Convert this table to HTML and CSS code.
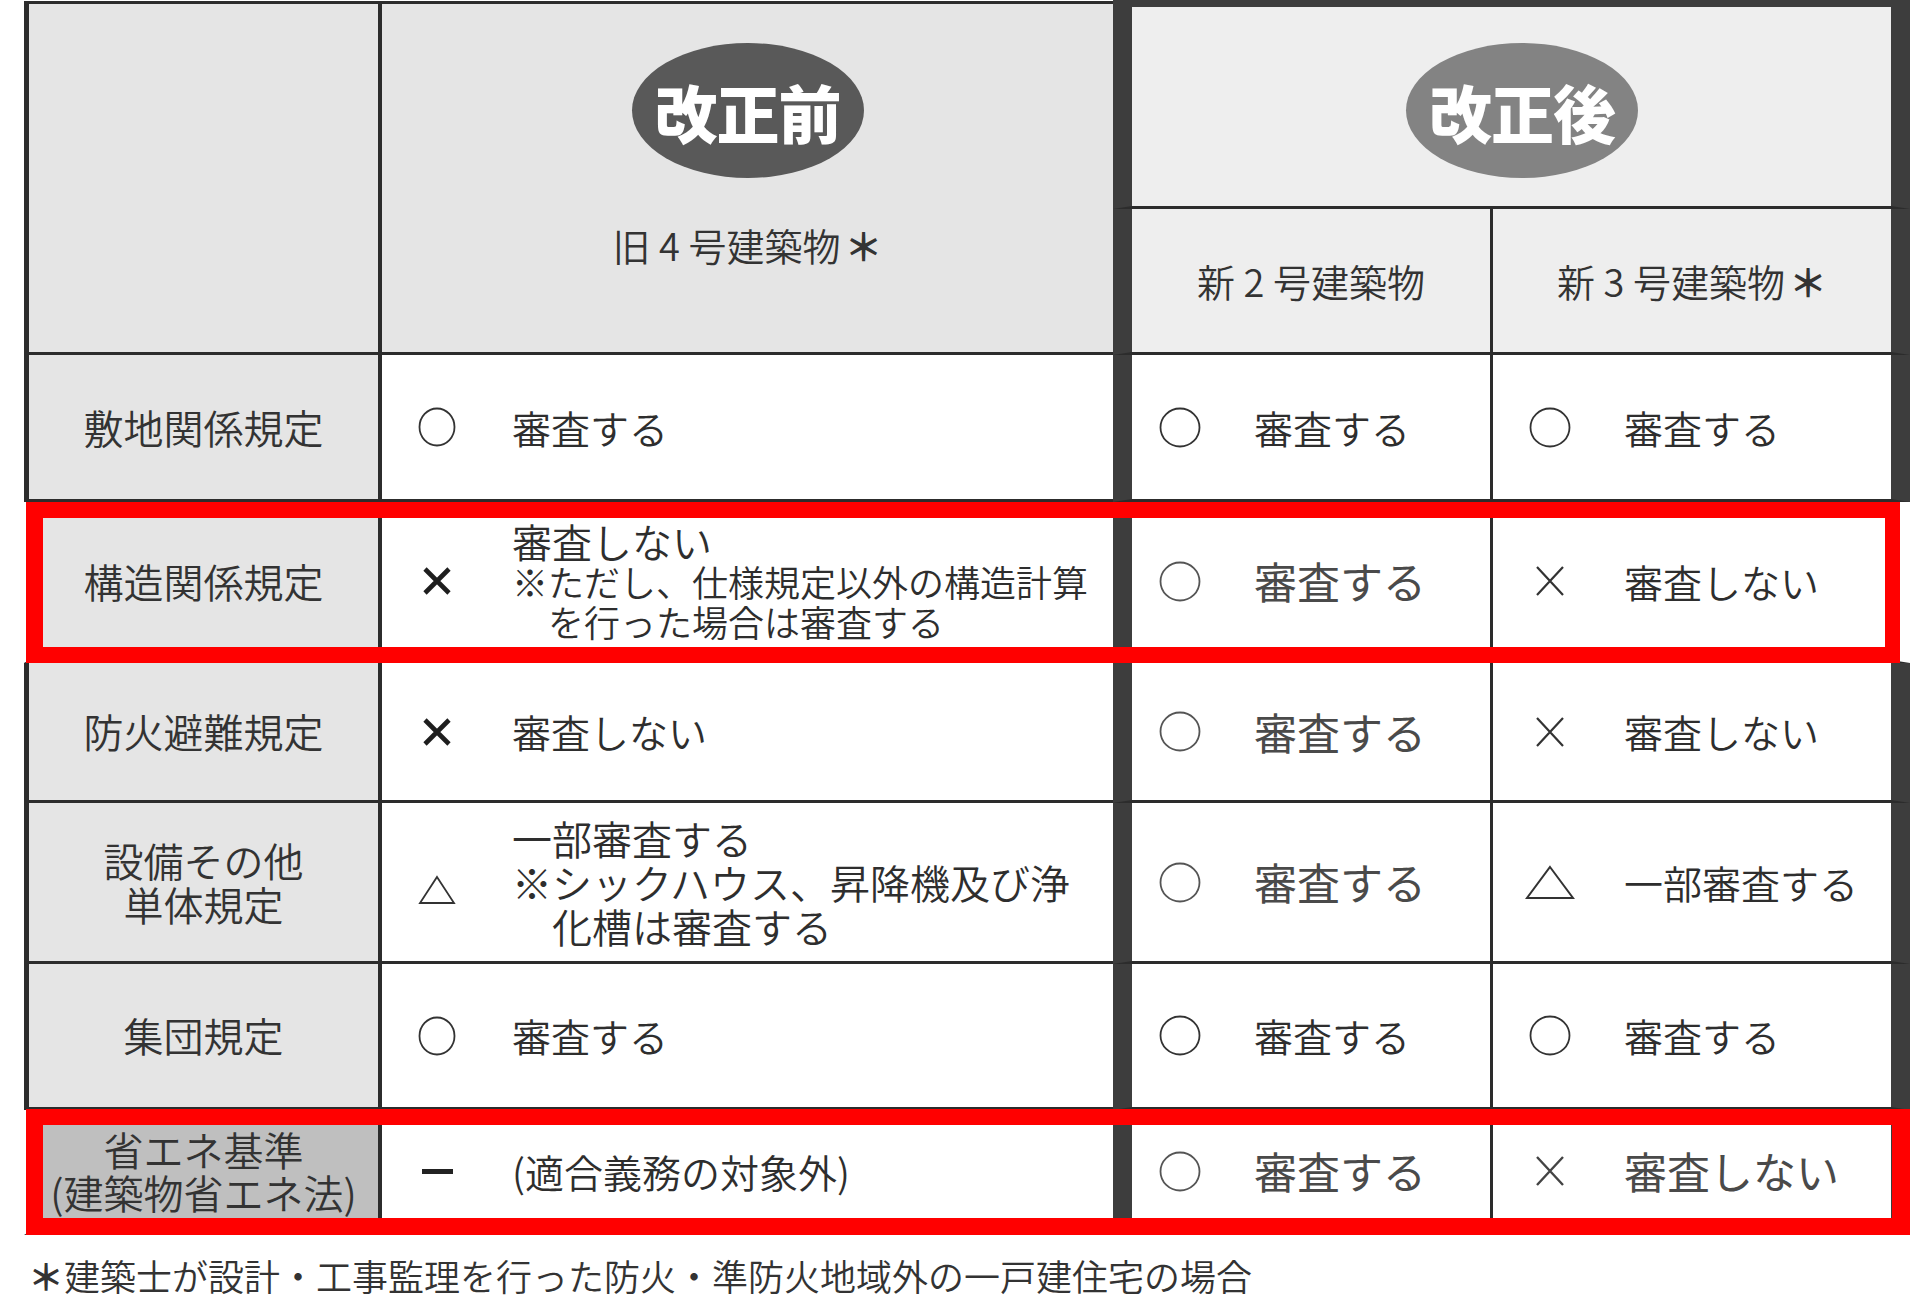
FILE: index.html
```html
<!DOCTYPE html>
<html lang="ja">
<head>
<meta charset="utf-8">
<title>審査対象の比較</title>
<link rel="stylesheet" href="styles.css">
</head>
<body>
<div class="page">
  <div class="table">
    <div class="cols head">
      <div class="hd-blank"></div>
      <div class="hd-before">
        <div class="badge badge-before">改正前</div>
        <div class="hd-title">旧 4 号建築物<span class="ast">＊</span></div>
      </div>
      <div class="hd-after">
        <div class="badge badge-after">改正後</div>
      </div>
      <div class="sub sub2">新 2 号建築物</div>
      <div class="sub sub3">新 3 号建築物<span class="ast">＊</span></div>
    </div>

    <div class="cols row r1">
      <div class="c1">敷地関係規定</div>
      <div class="c2"><span class="sym"><svg width="38" height="40" viewBox="0 0 38 40"><ellipse cx="19" cy="20" rx="17.5" ry="18.5" fill="none" stroke="#333" stroke-width="1.8"/></svg></span><span class="txt">審査する</span></div>
      <div class="c3"><span class="sym"><svg width="42" height="41" viewBox="0 0 42 41"><ellipse cx="21" cy="20.5" rx="19.5" ry="19" fill="none" stroke="#333" stroke-width="1.8"/></svg></span><span class="txt">審査する</span></div>
      <div class="c4"><span class="sym"><svg width="42" height="41" viewBox="0 0 42 41"><ellipse cx="21" cy="20.5" rx="19.5" ry="19" fill="none" stroke="#333" stroke-width="1.8"/></svg></span><span class="txt">審査する</span></div>
    </div>

    <div class="cols row r2 hl">
      <div class="c1">構造関係規定</div>
      <div class="c2"><span class="sym"><svg width="30" height="30" viewBox="0 0 30 30"><path d="M3 3 L27 27 M27 3 L3 27" stroke="#1e1e1e" stroke-width="4.6" fill="none"/></svg></span>
        <div class="txt multi m2">
          <div class="ln first">審査しない</div>
          <div class="ln">※ただし、仕様規定以外の構造計算</div>
          <div class="ln ind">を行った場合は審査する</div>
        </div>
      </div>
      <div class="c3"><span class="sym"><svg width="42" height="41" viewBox="0 0 42 41"><ellipse cx="21" cy="20.5" rx="19.5" ry="19" fill="none" stroke="#555" stroke-width="1.8"/></svg></span><span class="txt big">審査する</span></div>
      <div class="c4"><span class="sym"><svg width="32" height="32" viewBox="0 0 32 32"><path d="M3 2 L29 30 M29 2 L3 30" stroke="#333" stroke-width="2.2" fill="none"/></svg></span><span class="txt">審査しない</span></div>
    </div>

    <div class="cols row r3">
      <div class="c1">防火避難規定</div>
      <div class="c2"><span class="sym"><svg width="30" height="30" viewBox="0 0 30 30"><path d="M3 3 L27 27 M27 3 L3 27" stroke="#1e1e1e" stroke-width="4.6" fill="none"/></svg></span><span class="txt">審査しない</span></div>
      <div class="c3"><span class="sym"><svg width="42" height="41" viewBox="0 0 42 41"><ellipse cx="21" cy="20.5" rx="19.5" ry="19" fill="none" stroke="#555" stroke-width="1.8"/></svg></span><span class="txt big">審査する</span></div>
      <div class="c4"><span class="sym"><svg width="32" height="32" viewBox="0 0 32 32"><path d="M3 2 L29 30 M29 2 L3 30" stroke="#333" stroke-width="2.2" fill="none"/></svg></span><span class="txt">審査しない</span></div>
    </div>

    <div class="cols row r4">
      <div class="c1 two">設備その他<br>単体規定</div>
      <div class="c2"><span class="sym tri-low"><svg width="38" height="30" viewBox="0 0 38 30"><polygon points="19,2 36,28 2,28" fill="none" stroke="#333" stroke-width="1.8"/></svg></span>
        <div class="txt multi m4">
          <div class="ln">一部審査する</div>
          <div class="ln">※シックハウス、昇降機及び浄</div>
          <div class="ln ind">化槽は審査する</div>
        </div>
      </div>
      <div class="c3"><span class="sym"><svg width="42" height="41" viewBox="0 0 42 41"><ellipse cx="21" cy="20.5" rx="19.5" ry="19" fill="none" stroke="#555" stroke-width="1.8"/></svg></span><span class="txt big">審査する</span></div>
      <div class="c4"><span class="sym"><svg width="50" height="35" viewBox="0 0 50 35"><polygon points="25,2 48,33 2,33" fill="none" stroke="#333" stroke-width="2"/></svg></span><span class="txt">一部審査する</span></div>
    </div>

    <div class="cols row r5">
      <div class="c1">集団規定</div>
      <div class="c2"><span class="sym"><svg width="38" height="40" viewBox="0 0 38 40"><ellipse cx="19" cy="20" rx="17.5" ry="18.5" fill="none" stroke="#333" stroke-width="1.8"/></svg></span><span class="txt">審査する</span></div>
      <div class="c3"><span class="sym"><svg width="42" height="41" viewBox="0 0 42 41"><ellipse cx="21" cy="20.5" rx="19.5" ry="19" fill="none" stroke="#333" stroke-width="1.8"/></svg></span><span class="txt">審査する</span></div>
      <div class="c4"><span class="sym"><svg width="42" height="41" viewBox="0 0 42 41"><ellipse cx="21" cy="20.5" rx="19.5" ry="19" fill="none" stroke="#333" stroke-width="1.8"/></svg></span><span class="txt">審査する</span></div>
    </div>

    <div class="cols row r6 hl">
      <div class="c1 two dark">省エネ基準<br>(建築物省エネ法)</div>
      <div class="c2"><span class="sym"><span class="dash"></span></span><span class="txt">(適合義務の対象外)</span></div>
      <div class="c3"><span class="sym"><svg width="42" height="41" viewBox="0 0 42 41"><ellipse cx="21" cy="20.5" rx="19.5" ry="19" fill="none" stroke="#555" stroke-width="1.8"/></svg></span><span class="txt big">審査する</span></div>
      <div class="c4"><span class="sym"><svg width="32" height="32" viewBox="0 0 32 32"><path d="M3 2 L29 30 M29 2 L3 30" stroke="#444" stroke-width="2.4" fill="none"/></svg></span><span class="txt big">審査しない</span></div>
    </div>
  </div>
  <p class="note"><span class="ast">＊</span>建築士が設計・工事監理を行った防火・準防火地域外の一戸建住宅の場合</p>
</div>
</body>
</html>
```

FILE: styles.css
```css
* {
  box-sizing: border-box;
  margin: 0;
  padding: 0;
}

html,
body {
  background: #ffffff;
}

body {
  font-family: "Noto Sans CJK JP", "Noto Sans", sans-serif;
  font-weight: 350;
  color: #333333;
}

.page {
  width: 1920px;
  padding-left: 24px;
}

.table {
  width: 1886px;
  display: flex;
  flex-direction: column;
}

.cols {
  display: grid;
  grid-template-columns: 358px 731px 380px 417px;
}

/* ---------- header ---------- */
.head {
  grid-template-rows: 209px 146px;
}

.hd-blank {
  grid-row: 1 / 3;
  grid-column: 1;
  margin-top: 1px;
  background: #e5e5e5;
  border-top: 3px solid #2c2c2c;
  border-left: 5px solid #2c2c2c;
  border-right: 4px solid #2c2c2c;
  border-bottom: 3px solid #2c2c2c;
}

.hd-before {
  grid-row: 1 / 3;
  grid-column: 2;
  margin-top: 1px;
  background: #e5e5e5;
  border-top: 3px solid #2c2c2c;
  border-bottom: 3px solid #2c2c2c;
  display: flex;
  flex-direction: column;
  align-items: center;
  padding-top: 39px;
}

.hd-after {
  grid-row: 1;
  grid-column: 3 / 5;
  background: #eeeeee;
  border-top: 7px solid #3d3d3d;
  border-left: 19px solid #3d3d3d;
  border-right: 19px solid #3d3d3d;
  border-bottom: 3px solid #2c2c2c;
  display: flex;
  flex-direction: column;
  align-items: center;
  padding-top: 36px;
}

.badge {
  width: 232px;
  height: 135px;
  border-radius: 50%;
  display: flex;
  align-items: center;
  justify-content: center;
  color: #ffffff;
  font-size: 63px;
  font-weight: 900;
  letter-spacing: -1px;
  line-height: 1;
}

.badge-before {
  background: #595959;
}

.badge-after {
  background: #838383;
  margin-left: 21px;
}

.hd-title {
  margin-top: 44px;
  font-size: 38px;
  line-height: 46px;
  white-space: nowrap;
}

.ast {
  font-weight: 700;
  margin-left: 4px;
}

.note .ast {
  margin-left: 0;
}

.sub {
  grid-row: 2;
  background: #eeeeee;
  border-bottom: 3px solid #2c2c2c;
  display: flex;
  align-items: center;
  justify-content: center;
  font-size: 38px;
  white-space: nowrap;
}

.sub2 {
  grid-column: 3;
  border-left: 19px solid #3d3d3d;
  border-right: 3px solid #2c2c2c;
}

.sub3 {
  grid-column: 4;
  border-right: 19px solid #3d3d3d;
}

/* ---------- body rows ---------- */
.row {
  position: relative;
}

.r1 { height: 147px; }
.r2 { height: 161px; }
.r3 { height: 140px; }
.r4 { height: 161px; }
.r5 { height: 146px; }
.r6 { height: 125px; }

.c1,
.c2,
.c3,
.c4 {
  border-bottom: 3px solid #2c2c2c;
  display: flex;
  align-items: center;
  white-space: nowrap;
}

.c1 {
  background: #e5e5e5;
  border-left: 5px solid #2c2c2c;
  border-right: 4px solid #2c2c2c;
  justify-content: center;
  text-align: center;
  font-size: 40px;
  line-height: 45px;
}

.c1.two {
  line-height: 44px;
}

.r6 .c1.two {
  line-height: 43px;
}

.c1.dark {
  background: #bfbfbf;
}

.c2 {
  background: #ffffff;
  padding-left: 25px;
}

.c3 {
  background: #ffffff;
  border-left: 19px solid #3d3d3d;
  border-right: 3px solid #2c2c2c;
  padding-left: 18px;
}

.c4 {
  background: #ffffff;
  border-right: 19px solid #3d3d3d;
  padding-left: 27px;
}

.sym {
  width: 60px;
  flex-shrink: 0;
  display: flex;
  align-items: center;
  justify-content: center;
  margin-right: 44px;
}

.c2 .sym {
  margin-right: 45px;
}

.sym svg {
  display: block;
}

.tri-low {
  margin-top: 16px;
}

.dash {
  display: block;
  width: 31px;
  height: 5px;
  background: #222222;
}

.txt {
  font-size: 39px;
  line-height: 1.2;
  color: #2e2e2e;
}

.txt.big {
  font-size: 43px;
  font-weight: 400;
  color: #4a4a4a;
}

.m2 {
  font-size: 36px;
  line-height: 40px;
}

.m2 .first {
  font-size: 40px;
}

.m2 .ind {
  padding-left: 36px;
}

.m4 {
  font-size: 40px;
  line-height: 44px;
}

.m4 .ind {
  padding-left: 40px;
}

/* highlighted rows */
.hl::after {
  content: "";
  position: absolute;
  top: 0;
  bottom: 0;
  left: 2px;
  right: 10px;
  border: 16px solid #ff0000;
  border-left-width: 17px;
  border-right-width: 15px;
  pointer-events: none;
}

.r6.hl::after {
  top: -1px;
  right: 0;
  border-right-width: 18px;
  border-bottom-width: 17px;
}

.hl .c1 {
  border-left-color: #ffffff;
}

.r2 .c4 {
  border-right-color: #ffffff;
}

/* ---------- footnote ---------- */
.note {
  margin-top: 18px;
  margin-left: 4px;
  font-size: 36px;
  line-height: 44px;
  color: #333333;
  white-space: nowrap;
}
```
